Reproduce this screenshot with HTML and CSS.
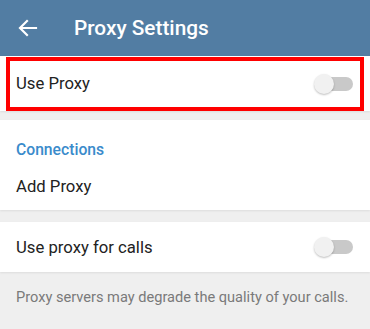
FILE: index.html
```html
<!DOCTYPE html>
<html>
<head>
<meta charset="utf-8">
<link rel="stylesheet" href="styles.css">
</head>
<body>
<div class="app">
  <header class="topbar">
    <svg class="back" width="24" height="24" viewBox="0 0 24 24"><path d="M20 12H5M11 5l-7 7 7 7" fill="none" stroke="#fff" stroke-width="2.2" stroke-linecap="square"/></svg>
    <h1 class="title">Proxy Settings</h1>
  </header>
  <section class="card first">
    <div class="row">
      <span class="label">Use Proxy</span>
      <span class="switch"><span class="thumb"></span></span>
    </div>
    <div class="highlight"></div>
  </section>
  <section class="card second">
    <div class="section-title">Connections</div>
    <div class="row add"><span class="label">Add Proxy</span></div>
  </section>
  <section class="card">
    <div class="row calls">
      <span class="label">Use proxy for calls</span>
      <span class="switch"><span class="thumb"></span></span>
    </div>
  </section>
  <p class="note">Proxy servers may degrade the quality of your calls.</p>
</div>
</body>
</html>
```
FILE: styles.css
```css
* { box-sizing: border-box; }
html, body { margin: 0; padding: 0; }
body {
  background: #efefef;
  font-family: Roboto, "Noto Sans", sans-serif;
  width: 370px;
  height: 329px;
  overflow: hidden;
}
.app { display: flex; flex-direction: column; }
.topbar {
  height: 56px;
  background: #527da3;
  display: flex;
  align-items: center;
  padding-left: 16px;
}
.back { margin-right: 34px; }
.title {
  margin: 0;
  color: #fff;
  font-size: 20.8px;
  font-weight: 500;
}
.card {
  background: #fff;
  box-shadow: 0 1px 2px rgba(0,0,0,0.08);
  margin-bottom: 10px;
  position: relative;
}
.first { margin-bottom: 9px; }
.second { margin-bottom: 12px; }
.row {
  height: 55px;
  display: flex;
  align-items: center;
  justify-content: space-between;
  padding: 0 17px 0 16px;
}
.label { font-size: 16.7px; color: #222; }
.section-title {
  color: #3a8bcb;
  font-size: 15.7px;
  font-weight: 500;
  padding: 20px 16px 0;
  height: 40px;
}
.add { height: 50px; padding-top: 2px; }
.calls { height: 50px; }
.switch {
  width: 37px;
  height: 14px;
  border-radius: 7px;
  background: #c9c9c9;
  position: relative;
}
.thumb {
  position: absolute;
  left: -2px;
  top: -3px;
  width: 20px;
  height: 20px;
  border-radius: 50%;
  background: #f1f1f1;
  box-shadow: 0 1px 2px rgba(0,0,0,0.25);
}
.highlight {
  position: absolute;
  left: 6px;
  top: 1px;
  width: 358px;
  height: 54px;
  border: 4px solid #ff0000;
}
.note {
  margin: 0;
  padding: 6px 16px;
  color: #7a7a7a;
  font-size: 14.6px;
}
```
